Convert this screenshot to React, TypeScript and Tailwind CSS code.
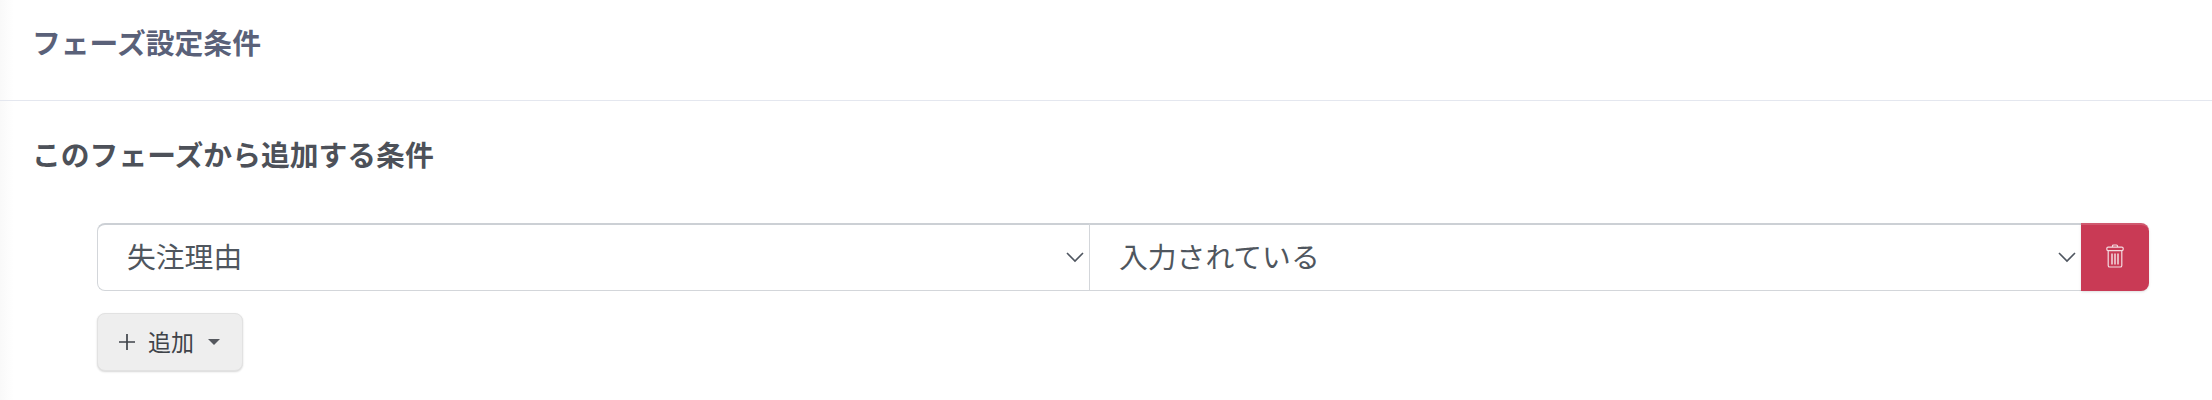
const cjk = '"Noto Sans CJK JP", "Noto Sans", sans-serif';

function Chevron() {
  return (
    <svg width="18" height="11" viewBox="0 0 18 11" fill="none" stroke="#4f5660" strokeWidth="1.6">
      <path d="M1 1l8 8 8-8" />
    </svg>
  );
}

function TrashIcon() {
  return (
    <svg className="mb-[4px]" width="18" height="24" viewBox="0 0 18 24" fill="none" stroke="#f3dbe0" strokeWidth="1.2">
      <path d="M6.5 3V2a1 1 0 0 1 1-1h3a1 1 0 0 1 1 1v1" />
      <rect x="0.8" y="3.2" width="16.4" height="3.4" rx="1.4" />
      <path d="M2.2 6.8v14.6a1.6 1.6 0 0 0 1.6 1.6h10.4a1.6 1.6 0 0 0 1.6-1.6V6.8" />
      <path d="M6 9.5v11M9 9.5v11M12 9.5v11" strokeWidth="1.5" />
    </svg>
  );
}

function SelectBox({ label, className }: { label: string; className: string }) {
  return (
    <div className={`flex h-[68px] flex-1 items-center justify-between bg-white pl-[29px] pr-[5px] border-y border-y-[#d3d6da] border-t-2 border-t-[#ccd0d5] ${className}`}>
      <span className="pb-[2px] text-[28.8px] leading-none text-[#4f565e]">{label}</span>
      <Chevron />
    </div>
  );
}

export default function App() {
  return (
    <div className="h-[400px] w-[2212px] bg-white bg-gradient-to-r from-[#f9f9f9] to-white to-[14px]" style={{ fontFamily: cjk }}>
      <div className="flex h-[101px] items-center border-b border-[#e4e7ef] pb-[16px] pl-[32px]">
        <h2 className="text-[28.8px] font-bold leading-none text-[#5a6179]">フェーズ設定条件</h2>
      </div>
      <div className="pl-[32px] pt-[39px]">
        <h3 className="text-[28.8px] font-bold leading-none text-[#4d5159]">このフェーズから追加する条件</h3>
      </div>
      <div className="pl-[97px] pr-[63px] pt-[54px]">
        <div className="flex">
          <SelectBox label="失注理由" className="rounded-l-[8px] border-l border-l-[#d3d6da]" />
          <SelectBox label="入力されている" className="border-l border-l-[#d3d6da]" />
          <button className="flex h-[68px] w-[68px] items-center justify-center rounded-r-[8px] border-t-2 border-[#d0596f] bg-[#c93a55] shadow-sm">
            <TrashIcon />
          </button>
        </div>
        <button className="mt-[22px] flex h-[58px] w-[146px] items-center rounded-[8px] border border-[#e2e2e2] bg-[#eeeeee] pl-[21px] text-[23px] leading-none text-[#3f4349] shadow-[0_1px_2px_rgba(0,0,0,0.16)]">
          <svg width="16" height="16" viewBox="0 0 16 16" stroke="#3f4349" strokeWidth="1.7">
            <path d="M8 0v16M0 8h16" />
          </svg>
          <span className="ml-[13px]">追加</span>
          <span className="ml-[14px] h-0 w-0 border-x-[6px] border-t-[6px] border-x-transparent border-t-[#55585e]" />
        </button>
      </div>
    </div>
  );
}
